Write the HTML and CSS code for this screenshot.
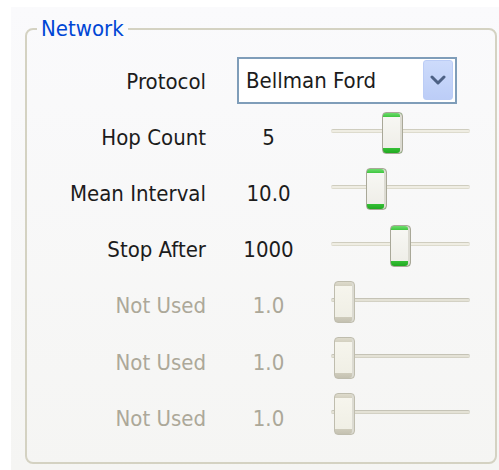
FILE: index.html
```html
<!DOCTYPE html>
<html lang="en">
<head>
<meta charset="utf-8">
<title>Network</title>
<link rel="stylesheet" href="styles.css">
</head>
<body>
<div class="page">
  <fieldset class="group">
    <legend class="group-title">Network</legend>
    <div class="form">
      <div class="label">Protocol</div>
      <div class="select">
        <span class="select-text">Bellman Ford</span>
        <span class="select-btn">
          <svg width="16" height="10" viewBox="0 0 16 10"><path d="M2 2 L8 8 L14 2" fill="none" stroke="#4d6185" stroke-width="3" stroke-linecap="round" stroke-linejoin="round"/></svg>
        </span>
      </div>

      <div class="label">Hop Count</div>
      <div class="value">5</div>
      <div class="slider"><div class="track"></div><div class="thumb" style="left: 51px"></div></div>

      <div class="label">Mean Interval</div>
      <div class="value">10.0</div>
      <div class="slider"><div class="track"></div><div class="thumb" style="left: 35px"></div></div>

      <div class="label">Stop After</div>
      <div class="value">1000</div>
      <div class="slider"><div class="track"></div><div class="thumb" style="left: 59px"></div></div>

      <div class="label off">Not Used</div>
      <div class="value off">1.0</div>
      <div class="slider off"><div class="track"></div><div class="thumb" style="left: 3px"></div></div>

      <div class="label off">Not Used</div>
      <div class="value off">1.0</div>
      <div class="slider off"><div class="track"></div><div class="thumb" style="left: 3px"></div></div>

      <div class="label off">Not Used</div>
      <div class="value off">1.0</div>
      <div class="slider off"><div class="track"></div><div class="thumb" style="left: 3px"></div></div>
    </div>
  </fieldset>
</div>
</body>
</html>
```
FILE: styles.css
```css
html, body {
  margin: 0;
  padding: 0;
  background: #ffffff;
}

body {
  font-family: "DejaVu Sans Condensed", "DejaVu Sans", sans-serif;
  font-size: 22px;
  color: #1c1c1c;
}

.page {
  margin: 7px 0 0 11px;
  height: 463px;
  background: linear-gradient(to bottom, #fafafc, #f5f5f3);
  padding-top: 10px;
  box-sizing: border-box;
  overflow: hidden;
}

.group {
  margin: 0 2px 0 14px;
  padding: 12px 0 0 0;
  border: 2px solid #d4d2c2;
  border-radius: 8px;
  height: 447px;
  box-sizing: border-box;
}

.group-title {
  margin-left: 10px;
  padding: 0 4px;
  color: #0046d5;
  line-height: 24px;
}

.form {
  display: grid;
  grid-template-columns: 179px 63px 139px;
  grid-auto-rows: 56.2px;
  column-gap: 31px;
  align-items: center;
}

.label {
  text-align: right;
  white-space: nowrap;
}

.value {
  text-align: center;
}

.off {
  color: #aca899;
}

/* combo box */
.select {
  grid-column: 2 / 4;
  width: 220px;
  height: 47px;
  box-sizing: border-box;
  border: 2px solid #7f9db9;
  background: #ffffff;
  display: flex;
  align-items: center;
  justify-content: space-between;
  padding: 2px 2px 2px 7px;
  margin-bottom: 2px;
}

.select-btn {
  width: 30px;
  height: 40px;
  box-sizing: border-box;
  border: 1px solid #bccdf6;
  border-radius: 3px;
  background: linear-gradient(to bottom, #cddbfb, #bccdf7);
  display: flex;
  align-items: center;
  justify-content: center;
}

/* trackbar */
.slider {
  position: relative;
  height: 42px;
  margin-bottom: 8px;
}

.track {
  position: absolute;
  left: 0;
  right: 0;
  top: 17px;
  height: 4px;
  box-sizing: border-box;
  border-top: 1px solid #cfcdbf;
  border-bottom: 1px solid #dddbcd;
  background: #efede3;
  border-radius: 2px;
}

.thumb {
  position: absolute;
  top: 0;
  width: 21px;
  height: 42px;
  box-sizing: border-box;
  border: 1px solid #a9a898;
  border-radius: 4px;
  background: linear-gradient(to bottom,
    #6ddc6d 0, #3fc63f 4px,
    #f7f7f3 4px, #efeee8 calc(100% - 5px),
    #36c036 calc(100% - 5px), #20a920 100%);
  box-shadow: inset -2px 0 0 #dcdbd2;
}

.slider.off .track {
  border-top-color: #c5c3b6;
  border-bottom-color: #d3d1c4;
  background: #e4e2d6;
}

.slider.off .thumb {
  border-color: #bfbdae;
  background: linear-gradient(to bottom,
    #dedbcc 0, #d3d0c0 4px,
    #f6f5ed 4px, #f0efe5 calc(100% - 5px),
    #cfccbc calc(100% - 5px), #c4c1b1 100%);
}
```
